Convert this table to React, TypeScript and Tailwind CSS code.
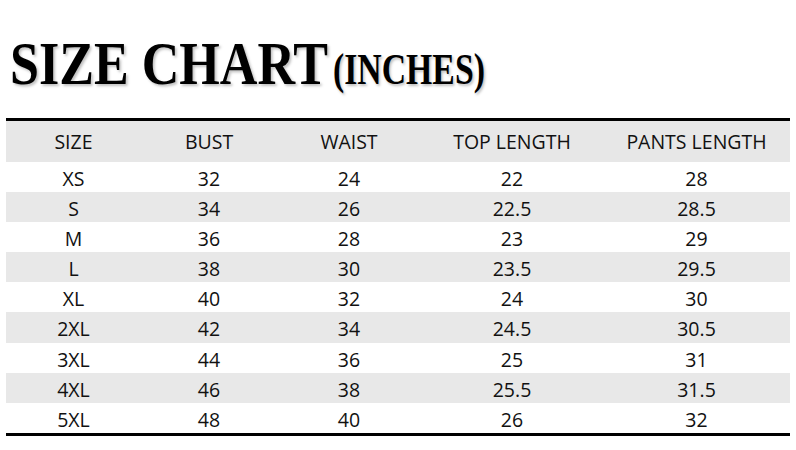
const headers = ["SIZE", "BUST", "WAIST", "TOP LENGTH", "PANTS LENGTH"];

const rows = [
  ["XS", "32", "24", "22", "28"],
  ["S", "34", "26", "22.5", "28.5"],
  ["M", "36", "28", "23", "29"],
  ["L", "38", "30", "23.5", "29.5"],
  ["XL", "40", "32", "24", "30"],
  ["2XL", "42", "34", "24.5", "30.5"],
  ["3XL", "44", "36", "25", "31"],
  ["4XL", "46", "38", "25.5", "31.5"],
  ["5XL", "48", "40", "26", "32"],
];

const cols = "grid grid-cols-[135px_136px_144px_182px_187px]";

export default function App() {
  return (
    <div className="w-[796px] h-[450px] bg-white overflow-hidden font-['Open_Sans',sans-serif] text-[#111]">
      {/* title: serif squeezed to match the condensed display face */}
      <div className="pl-[10px] pt-[32px] h-[118px]">
        <h1 className="flex items-baseline whitespace-nowrap font-['Liberation_Serif',serif] font-bold text-black leading-none [text-shadow:2px_2px_3px_rgba(0,0,0,0.25)]">
          <span className="w-[323px] shrink-0">
            <span className="inline-block origin-left scale-x-[0.84] text-[62px]">SIZE CHART</span>
          </span>
          <span className="inline-block origin-left scale-x-[0.75] text-[45px]">(INCHES)</span>
        </h1>
      </div>

      <div className="mx-[6px] w-[784px] border-t-[3px] border-b-[3px] border-black">
        <div className={`${cols} h-[41px] items-center bg-[#e7e7e7] text-[19.5px]`}>
          {headers.map((h) => (
            <div key={h} className="text-center pt-[1px]">
              {h}
            </div>
          ))}
        </div>
        {rows.map((r, i) => (
          <div
            key={r[0]}
            className={`${cols} h-[30.1px] items-center text-[19.5px] ${
              i % 2 === 1 ? "bg-[#e8e8e8]" : "bg-white"
            }`}
          >
            {r.map((c, j) => (
              <div key={j} className="text-center pt-[2px]">
                {c}
              </div>
            ))}
          </div>
        ))}
      </div>
    </div>
  );
}
